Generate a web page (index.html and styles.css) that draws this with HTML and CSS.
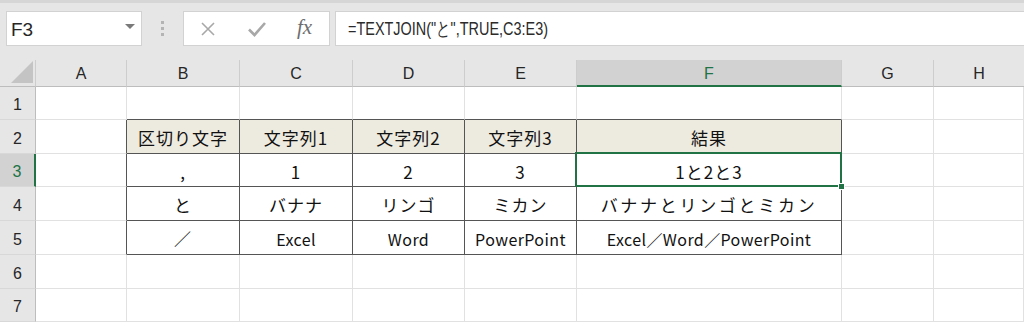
FILE: index.html
```html
<!DOCTYPE html>
<html lang="ja">
<head>
<meta charset="utf-8">
<title>TEXTJOIN</title>
<link rel="stylesheet" href="styles.css">
</head>
<body>
<div class="app">
  <div class="topstrip"></div>
  <div class="toolbar">
    <div class="namebox">
      <span class="ref">F3</span>
      <svg class="caret" width="10" height="6" viewBox="0 0 10 6"><path d="M0 0h10L5 5z" fill="#7a7a7a"/></svg>
    </div>
    <div class="grip"><i></i><i></i><i></i></div>
    <div class="fxbox">
      <svg class="ico" width="18" height="18" viewBox="0 0 18 18"><path d="M3 3L15 15M15 3L3 15" stroke="#a8a8a8" stroke-width="1.6" fill="none"/></svg>
      <svg class="ico" width="20" height="18" viewBox="0 0 20 18"><path d="M2 9.5L7.5 15L18 3" stroke="#a8a8a8" stroke-width="2.6" fill="none"/></svg>
      <span class="fx">fx</span>
    </div>
    <div class="formula"><span class="ftext">=TEXTJOIN("と",TRUE,C3:E3)</span></div>
  </div>
  <div class="sheet">
    <div class="hd corner"><svg width="22" height="22" viewBox="0 0 22 22"><path d="M22 0V22H0z" fill="#c4c4c4"/></svg></div>
    <div class="hd col">A</div>
    <div class="hd col">B</div>
    <div class="hd col">C</div>
    <div class="hd col">D</div>
    <div class="hd col">E</div>
    <div class="hd col sel">F</div>
    <div class="hd col">G</div>
    <div class="hd col last">H</div>

    <div class="hd row">1</div>
    <div class="c"></div>
    <div class="c above"></div>
    <div class="c above"></div>
    <div class="c above"></div>
    <div class="c above"></div>
    <div class="c above"></div>
    <div class="c"></div>
    <div class="c"></div>

    <div class="hd row">2</div>
    <div class="c lefttb"></div>
    <div class="c tb th">区切り文字</div>
    <div class="c tb th">文字列1</div>
    <div class="c tb th">文字列2</div>
    <div class="c tb th">文字列3</div>
    <div class="c tb th">結果</div>
    <div class="c"></div>
    <div class="c"></div>

    <div class="hd row rsel">3</div>
    <div class="c lefttb"></div>
    <div class="c tb">,</div>
    <div class="c tb">1</div>
    <div class="c tb">2</div>
    <div class="c tb">3</div>
    <div class="c tb active">1と2と3<span class="selbox"></span><span class="handle"></span></div>
    <div class="c"></div>
    <div class="c"></div>

    <div class="hd row">4</div>
    <div class="c lefttb"></div>
    <div class="c tb">と</div>
    <div class="c tb">バナナ</div>
    <div class="c tb">リンゴ</div>
    <div class="c tb">ミカン</div>
    <div class="c tb wide">バナナとリンゴとミカン</div>
    <div class="c"></div>
    <div class="c"></div>

    <div class="hd row">5</div>
    <div class="c lefttb"></div>
    <div class="c tb">／</div>
    <div class="c tb sm">Excel</div>
    <div class="c tb sm">Word</div>
    <div class="c tb sm">PowerPoint</div>
    <div class="c tb sm">Excel／Word／PowerPoint</div>
    <div class="c"></div>
    <div class="c"></div>

    <div class="hd row">6</div>
    <div class="c"></div>
    <div class="c"></div>
    <div class="c"></div>
    <div class="c"></div>
    <div class="c"></div>
    <div class="c"></div>
    <div class="c"></div>
    <div class="c"></div>

    <div class="hd row">7</div>
    <div class="c"></div>
    <div class="c"></div>
    <div class="c"></div>
    <div class="c"></div>
    <div class="c"></div>
    <div class="c"></div>
    <div class="c"></div>
    <div class="c"></div>
  </div>
</div>
</body>
</html>
```

FILE: styles.css
```css
* { box-sizing: border-box; }
html, body { margin: 0; padding: 0; background: #fff; }
body { width: 1024px; height: 322px; overflow: hidden; }

.app { width: 1024px; }

.topstrip { height: 3px; background: #d6d6d6; }

.toolbar {
  height: 57px;
  background: #e6e6e6;
  display: flex;
  align-items: flex-start;
  padding-top: 8px;
  padding-left: 6px;
}

.namebox {
  width: 136px;
  height: 35px;
  background: #fff;
  border: 1px solid #d2d2d2;
  display: flex;
  align-items: center;
  justify-content: space-between;
  padding: 0 6px 0 4px;
}
.ref {
  font-family: "Liberation Sans", Arial, sans-serif;
  font-size: 19px;
  color: #262626;
  margin-top: 2px;
}
.caret { margin-top: -3px; }

.grip {
  width: 41px;
  height: 35px;
  display: flex;
  flex-direction: column;
  align-items: center;
  justify-content: center;
  gap: 3px;
}
.grip i {
  display: block;
  width: 3px;
  height: 3px;
  background: #b4b4b4;
}

.fxbox {
  width: 147px;
  height: 35px;
  background: #fff;
  border: 1px solid #d2d2d2;
  display: flex;
  align-items: center;
  padding-left: 15px;
  gap: 30px;
}
.fx {
  font-family: "Liberation Serif", "DejaVu Serif", serif;
  font-style: italic;
  font-size: 21px;
  color: #6e6e6e;
  margin-top: -3px;
}

.formula {
  flex: 1;
  height: 35px;
  margin-left: 5px;
  background: #fff;
  border: 1px solid #d2d2d2;
  border-right: none;
  display: flex;
  align-items: center;
  padding-left: 12px;
  font-family: "Liberation Sans", Arial, sans-serif;
  font-size: 19px;
  color: #2b2b2b;
}
.ftext {
  display: inline-block;
  transform: scaleX(0.76);
  transform-origin: left center;
  white-space: nowrap;
}

.sheet {
  display: grid;
  grid-template-columns: 36px 91px 113px 113px 112px 112px 265px 92px 90px;
  grid-template-rows: 27px 33px 34px 33px 34px 34px 34px 33px;
}

.hd {
  background: #e6e6e6;
  font-family: "Liberation Sans", Arial, sans-serif;
  font-size: 16px;
  color: #262626;
  display: flex;
  align-items: center;
  justify-content: center;
}
.corner {
  justify-content: flex-end;
  align-items: flex-end;
  padding: 0 2px 3px 0;
  border-right: 1px solid #cdcdcd;
  border-bottom: 1px solid #bdbdbd;
}
.col {
  border-right: 1px solid #cdcdcd;
  border-bottom: 1px solid #bdbdbd;
  padding-top: 2px;
}
.col.last { border-right: none; }
.col.sel {
  background: #d2d2d2;
  color: #217346;
  border-bottom: 2px solid #217346;
  padding-top: 3px;
}
.row {
  border-right: 1px solid #bdbdbd;
  border-bottom: 1px solid #d8d8d8;
  font-size: 16px;
  padding-top: 4px;
}
.row.rsel {
  background: #d2d2d2;
  color: #217346;
  border-right: 2px solid #217346;
}

.c {
  border-right: 1px solid #e1e1e1;
  border-bottom: 1px solid #e1e1e1;
  font-family: "Noto Sans CJK JP", "Noto Sans", sans-serif;
  font-size: 17px;
  color: #111;
  display: flex;
  align-items: center;
  justify-content: center;
  padding-top: 2px;
  position: relative;
  white-space: nowrap;
}
.c.above { border-bottom-color: #555; }
.c.lefttb { border-right-color: #555; }
.c.tb {
  border-right-color: #555;
  border-bottom-color: #555;
  letter-spacing: 1px;
}
.c.th { background: #edeae0; }
.c.wide { letter-spacing: 2.7px; }
.c.sm { font-size: 16px; letter-spacing: 0.4px; }
.c.active { z-index: 2; }

.selbox {
  position: absolute;
  left: -2px;
  top: -2px;
  right: -1px;
  bottom: -1px;
  border: 2px solid #217346;
  pointer-events: none;
}
.handle {
  position: absolute;
  right: -4px;
  bottom: -4px;
  width: 7px;
  height: 7px;
  background: #217346;
  border: 1px solid #fff;
}
```
